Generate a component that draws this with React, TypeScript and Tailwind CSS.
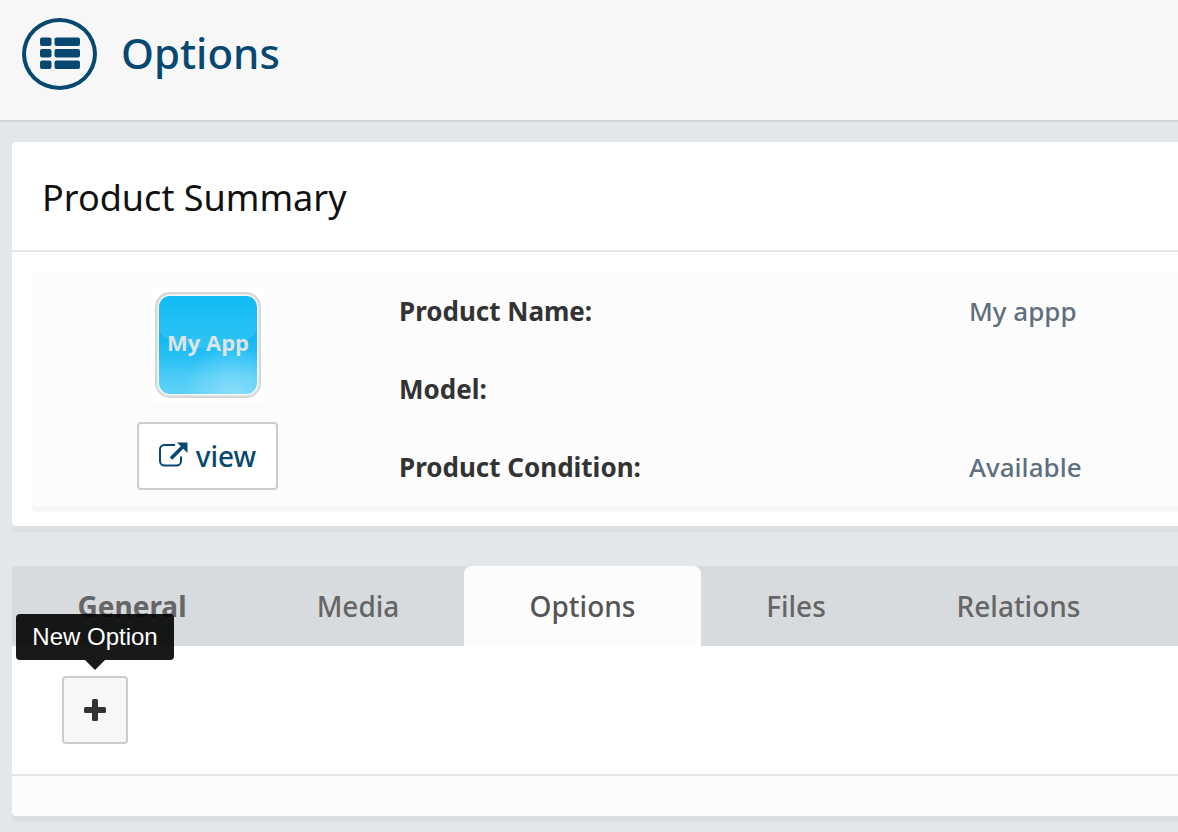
import React, { useState } from 'react'
import clsx from 'clsx'

const summary = [
  { label: 'Product Name:', value: 'My appp' },
  { label: 'Model:', value: '' },
  { label: 'Product Condition:', value: 'Available' },
]

const tabs = [
  { name: 'General', width: 'w-[240px]' },
  { name: 'Media', width: 'w-[212px]' },
  { name: 'Options', width: 'w-[237px]' },
  { name: 'Files', width: 'w-[190px]' },
  { name: 'Relations', width: 'w-[255px]' },
]

const ListIcon = () => (
  <svg width="42" height="34" viewBox="0 0 42 34" fill="currentColor" aria-hidden="true">
    <rect x="1" y="0.5" width="11.5" height="8.5" rx="2" />
    <rect x="15.5" y="0.5" width="25.5" height="8.5" rx="2" />
    <rect x="1" y="12" width="11.5" height="8.5" rx="2" />
    <rect x="15.5" y="12" width="25.5" height="8.5" rx="2" />
    <rect x="1" y="23.5" width="11.5" height="8.5" rx="2" />
    <rect x="15.5" y="23.5" width="25.5" height="8.5" rx="2" />
  </svg>
)

const ExternalLinkIcon = () => (
  <svg width="29" height="28" viewBox="0 0 29 28" fill="none" aria-hidden="true">
    <path
      d="M16 3H5.500A4.500 4.500 0 0 0 1 7.500v11.500a4.500 4.500 0 0 0 4.500 4.500h12a4.500 4.500 0 0 0 4.500-4.500v-4.500"
      stroke="currentColor"
      strokeWidth="2"
    />
    <path d="M12 16.500 24 4.500" stroke="currentColor" strokeWidth="3.600" />
    <path d="M18 0.500H28.500V11Z" fill="currentColor" />
  </svg>
)

const PlusIcon = () => (
  <svg width="22" height="22" viewBox="0 0 22 22" fill="currentColor" aria-hidden="true">
    <rect x="8" y="0" width="6" height="22" rx="1.500" />
    <rect x="0" y="8" width="22" height="6" rx="1.500" />
  </svg>
)

const AppThumbnail = () => (
  <svg width="114" height="114" viewBox="0 0 114 114" role="img" aria-label="My App">
    <defs>
      <linearGradient id="sky" x1="0" y1="0" x2="0" y2="1">
        <stop offset="0" stopColor="#12bbf4" />
        <stop offset="0.450" stopColor="#2cc2f5" />
        <stop offset="0.700" stopColor="#42c8f6" />
        <stop offset="1" stopColor="#5ed1f8" />
      </linearGradient>
      <linearGradient id="lower" x1="0" y1="0" x2="0" y2="1">
        <stop offset="0" stopColor="#08b6f2" />
        <stop offset="1" stopColor="#08b6f2" stopOpacity="0" />
      </linearGradient>
      <radialGradient id="glow" cx="0.750" cy="1" r="0.500">
        <stop offset="0" stopColor="#9be3fb" stopOpacity="0.700" />
        <stop offset="1" stopColor="#9be3fb" stopOpacity="0" />
      </radialGradient>
    </defs>
    <rect width="114" height="114" fill="#fff" />
    <rect x="5" y="5" width="104" height="104" rx="14" fill="#ececec" stroke="#d6d6d6" strokeWidth="2" />
    <rect x="7" y="7" width="100" height="100" rx="12" fill="#f0fafe" />
    <rect x="8" y="8" width="98" height="98" rx="11" fill="url(#sky)" />
    <path d="M8 43Q20 60 57 60T106 43V90H8Z" fill="url(#lower)" opacity="0.800" />
    <rect x="8" y="8" width="98" height="98" rx="11" fill="url(#glow)" />
    <text
      x="57"
      y="63"
      textAnchor="middle"
      fill="#dfe3e5"
      className="font-['Open_Sans',sans-serif] text-[22px] font-bold"
    >
      My App
    </text>
  </svg>
)

const App = () => {
  const [activeTab, setActiveTab] = useState('Options')

  return (
    <div className="min-h-screen overflow-x-hidden bg-[#e3e7ea] font-['Noto_Sans',sans-serif] font-medium">
      <header className="flex items-start gap-6 border-b-2 border-[#d0d4d7] bg-[#f7f7f7] pt-[18px] pb-[30px] pl-[22px] text-[#064870]">
        <span className="flex h-[72px] w-[75px] items-center justify-center rounded-[50%] border-4 border-[#064870]">
          <ListIcon />
        </span>
        <h1 className="text-[42px] leading-[70px]">Options</h1>
      </header>

      <main className="flex flex-col gap-10 py-5 pl-3">
        <section className="rounded-l bg-white pb-5 shadow-[0_6px_0_#dce0e3]">
          <h2 className="border-b-2 border-[#e6e6e6] px-[30px] pt-1 text-[36px] leading-[104px] font-normal text-[#111]">
            Product Summary
          </h2>
          <div className="mt-5 ml-5 flex rounded-l bg-[#fcfcfc] shadow-[0_6px_0_#f7f7f7]">
            <div className="flex w-[351px] shrink-0 flex-col items-center gap-5 py-4">
              <AppThumbnail />
              <a
                href="#view"
                className="flex h-[68px] w-[141px] items-center justify-center gap-2 rounded border-2 border-[#ccc] bg-white text-[28px] text-[#064870]"
              >
                <ExternalLinkIcon />
                view
              </a>
            </div>
            <dl className="flex-1 text-[26px] leading-[78px]">
              {summary.map((item) => (
                <div key={item.label} className="flex">
                  <dt className="w-[570px] shrink-0 px-4 font-bold text-[#333]">
                    {item.label}
                  </dt>
                  <dd className="px-4 text-[#5f6f7e]">{item.value}</dd>
                </div>
              ))}
            </dl>
          </div>
        </section>

        <section className="rounded-l shadow-[0_6px_0_#dce0e3]">
          <div role="tablist" className="flex rounded-tl bg-[#d8dbde]">
            {tabs.map((tab) => (
              <button
                key={tab.name}
                type="button"
                role="tab"
                aria-selected={activeTab === tab.name}
                onClick={() => setActiveTab(tab.name)}
                className={clsx(
                  'h-20 shrink-0 rounded-t-lg text-[28px]',
                  tab.width,
                  tab.name === 'General' && 'font-bold',
                  activeTab === tab.name
                    ? 'bg-[#fcfcfc] text-[#555]'
                    : 'text-[#666]'
                )}
              >
                {tab.name}
              </button>
            ))}
          </div>
          <div className="border-b-2 border-[#e6e6e6] bg-white pt-[30px] pb-[30px] pl-[50px]">
            <div className="relative flex w-[66px] justify-center">
              <button
                type="button"
                aria-label="New Option"
                className="flex h-[68px] w-full items-center justify-center rounded border-2 border-[#ccc] bg-[#f7f7f7] text-[#333]"
              >
                <PlusIcon />
              </button>
              {/* Tooltip */}
              <div
                role="tooltip"
                className="absolute bottom-full mb-4 rounded bg-black/90 px-4 font-['Liberation_Sans',sans-serif] text-[24px] leading-[46px] whitespace-nowrap text-white"
              >
                New Option
                <span className="absolute top-full left-1/2 -translate-x-1/2 border-x-10 border-t-10 border-x-transparent border-t-black/90" />
              </div>
            </div>
          </div>
          <div className="h-10 rounded-bl bg-[#fcfcfc]" />
        </section>
      </main>
    </div>
  )
}

export default App
